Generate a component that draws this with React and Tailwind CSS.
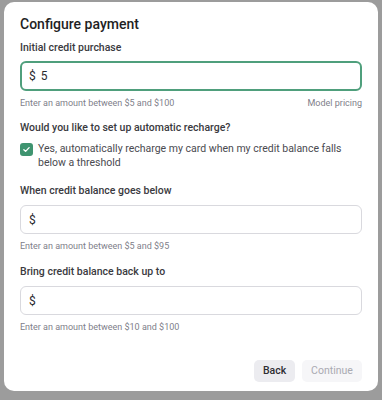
export default function App() {
  const font = { fontFamily: "Roboto, 'Noto Sans', sans-serif" };
  return (
    <div className="h-[400px] w-[382px] bg-[#9c9c9c] pt-[2px] pl-[4px]" style={font}>
      <div className="flex h-[389px] w-[374px] flex-col rounded-[10px] bg-white px-4 pt-[12px] text-[#26262b]">
        <h2 className="text-[14px] font-medium leading-5 text-[#1f1f24]">Configure payment</h2>

        <label className="mt-[6px] text-[10.5px] font-medium leading-4 text-[#3a3a40]">Initial credit purchase</label>
        <div className="mt-[5px] flex h-[30px] items-center rounded-[6px] border-2 border-[#4f9f7c] px-[7px] text-[12px] text-[#2a2a2e]">
          <span>$</span>
          <span className="ml-[5px]">5</span>
        </div>
        <div className="mt-[5px] flex justify-between text-[9px] leading-[14px] text-[#80808a]">
          <span>Enter an amount between $5 and $100</span>
          <span>Model pricing</span>
        </div>

        <label className="mt-[10px] text-[10.5px] font-medium leading-4 text-[#3a3a40]">Would you like to set up automatic recharge?</label>
        <div className="mt-[6px] flex items-start gap-[5px]">
          <span className="mt-[1px] flex h-[13px] w-[13px] shrink-0 items-center justify-center rounded-[3px] bg-[#3f9470]">
            <svg width="9" height="9" viewBox="0 0 12 12" fill="none">
              <path d="M2.5 6.3l2.3 2.2 4.7-5" stroke="white" strokeWidth="1.8" strokeLinecap="round" strokeLinejoin="round" />
            </svg>
          </span>
          <span className="text-[10.5px] leading-[14px] text-[#4a4a50]">
            Yes, automatically recharge my card when my credit balance falls below a threshold
          </span>
        </div>

        <label className="mt-[13px] text-[10.5px] font-medium leading-4 text-[#3a3a40]">When credit balance goes below</label>
        <div className="mt-[6px] flex h-[29px] items-center rounded-[6px] border border-[#d9d9de] px-[8px] text-[12px] text-[#2a2a2e]">
          <span>$</span>
        </div>
        <div className="mt-[5px] text-[9px] leading-[14px] text-[#80808a]">Enter an amount between $5 and $95</div>

        <label className="mt-[11px] text-[10.5px] font-medium leading-4 text-[#3a3a40]">Bring credit balance back up to</label>
        <div className="mt-[6px] flex h-[29px] items-center rounded-[6px] border border-[#d9d9de] px-[8px] text-[12px] text-[#2a2a2e]">
          <span>$</span>
        </div>
        <div className="mt-[5px] text-[9px] leading-[14px] text-[#80808a]">Enter an amount between $10 and $100</div>

        <div className="mt-auto mb-[9px] flex justify-end gap-[7px]">
          <button className="h-[22px] w-[41px] rounded-[5px] bg-[#ececf0] text-[10.5px] font-medium text-[#2e2e33]">Back</button>
          <button className="h-[22px] w-[60px] rounded-[5px] bg-[#f6f6f8] text-[10.5px] text-[#aaaab2]">Continue</button>
        </div>
      </div>
    </div>
  );
}
